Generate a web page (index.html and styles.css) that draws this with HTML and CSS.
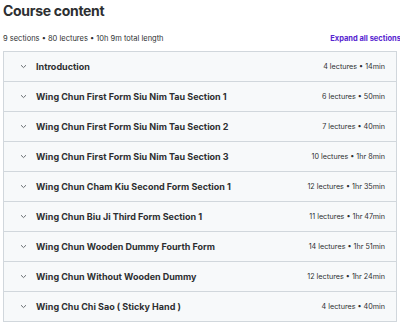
FILE: index.html
```html
<!DOCTYPE html>
<html lang="en">

<head>
    <meta charset="UTF-8">
    <meta name="viewport" content="width=device-width, initial-scale=1.0">
    <title>Course content</title>
    <link rel="stylesheet" href="styles.css">
</head>

<body>
    <div class="container">
        <h2 class="title">Course content</h2>

        <div class="content-header">
            <span class="content-stats">9 sections &bull; 80 lectures &bull; 10h 9m total length</span>
            <button class="expand-all">Expand all sections</button>
        </div>

        <div class="curriculum">
            <div class="section">
                <span class="chevron"><svg width="7" height="5" viewBox="0 0 7 5"><path d="M1 1.2L3.5 3.6L6 1.2" fill="none" stroke="currentColor" stroke-width="1"/></svg></span>
                <span class="section-title">Introduction</span>
                <span class="section-meta">4 lectures &bull; 14min</span>
            </div>
            <div class="section">
                <span class="chevron"><svg width="7" height="5" viewBox="0 0 7 5"><path d="M1 1.2L3.5 3.6L6 1.2" fill="none" stroke="currentColor" stroke-width="1"/></svg></span>
                <span class="section-title">Wing Chun First Form Siu Nim Tau Section 1</span>
                <span class="section-meta">6 lectures &bull; 50min</span>
            </div>
            <div class="section">
                <span class="chevron"><svg width="7" height="5" viewBox="0 0 7 5"><path d="M1 1.2L3.5 3.6L6 1.2" fill="none" stroke="currentColor" stroke-width="1"/></svg></span>
                <span class="section-title">Wing Chun First Form Siu Nim Tau Section 2</span>
                <span class="section-meta">7 lectures &bull; 40min</span>
            </div>
            <div class="section">
                <span class="chevron"><svg width="7" height="5" viewBox="0 0 7 5"><path d="M1 1.2L3.5 3.6L6 1.2" fill="none" stroke="currentColor" stroke-width="1"/></svg></span>
                <span class="section-title">Wing Chun First Form Siu Nim Tau Section 3</span>
                <span class="section-meta">10 lectures &bull; 1hr 8min</span>
            </div>
            <div class="section">
                <span class="chevron"><svg width="7" height="5" viewBox="0 0 7 5"><path d="M1 1.2L3.5 3.6L6 1.2" fill="none" stroke="currentColor" stroke-width="1"/></svg></span>
                <span class="section-title">Wing Chun Cham Kiu Second Form Section 1</span>
                <span class="section-meta">12 lectures &bull; 1hr 35min</span>
            </div>
            <div class="section">
                <span class="chevron"><svg width="7" height="5" viewBox="0 0 7 5"><path d="M1 1.2L3.5 3.6L6 1.2" fill="none" stroke="currentColor" stroke-width="1"/></svg></span>
                <span class="section-title">Wing Chun Biu Ji Third Form Section 1</span>
                <span class="section-meta">11 lectures &bull; 1hr 47min</span>
            </div>
            <div class="section">
                <span class="chevron"><svg width="7" height="5" viewBox="0 0 7 5"><path d="M1 1.2L3.5 3.6L6 1.2" fill="none" stroke="currentColor" stroke-width="1"/></svg></span>
                <span class="section-title">Wing Chun Wooden Dummy Fourth Form</span>
                <span class="section-meta">14 lectures &bull; 1hr 51min</span>
            </div>
            <div class="section">
                <span class="chevron"><svg width="7" height="5" viewBox="0 0 7 5"><path d="M1 1.2L3.5 3.6L6 1.2" fill="none" stroke="currentColor" stroke-width="1"/></svg></span>
                <span class="section-title">Wing Chun Without Wooden Dummy</span>
                <span class="section-meta">12 lectures &bull; 1hr 24min</span>
            </div>
            <div class="section">
                <span class="chevron"><svg width="7" height="5" viewBox="0 0 7 5"><path d="M1 1.2L3.5 3.6L6 1.2" fill="none" stroke="currentColor" stroke-width="1"/></svg></span>
                <span class="section-title">Wing Chu Chi Sao ( Sticky Hand )</span>
                <span class="section-meta">4 lectures &bull; 40min</span>
            </div>
        </div>
    </div>
</body>

</html>
```

FILE: styles.css
```css
* {
    margin: 0;
    padding: 0;
    box-sizing: border-box;
    font-family: Inter, 'Noto Sans', sans-serif;
}

body {
    background-color: #fff;
    color: #2d2f31;
    overflow: hidden;
}

.container {
    width: 394px;
    margin-left: 3px;
}

.title {
    font-size: 14px;
    font-weight: 700;
    line-height: 21px;
    letter-spacing: -0.3px;
}

.content-header {
    display: flex;
    justify-content: space-between;
    align-items: baseline;
    margin-top: 12px;
    margin-right: -4px;
    height: 18px;
}

.content-stats {
    font-size: 7.5px;
    line-height: 12px;
}

.expand-all {
    background: none;
    border: none;
    font-size: 7.5px;
    font-weight: 700;
    color: #5624d0;
    cursor: pointer;
}

.curriculum {
    border: 1px solid #d1d7dc;
}

.section {
    display: flex;
    align-items: center;
    height: 29px;
    padding: 0 11px 0 16px;
    background-color: #f7f9fa;
}

.section + .section {
    border-top: 1px solid #d1d7dc;
    height: 30px;
}

.chevron {
    display: flex;
    color: #6a6f73;
    width: 16px;
}

.section-title {
    flex-grow: 1;
    font-size: 9px;
    font-weight: 700;
}

.section-meta {
    font-size: 7.2px;
    color: #2d2f31;
}
```
